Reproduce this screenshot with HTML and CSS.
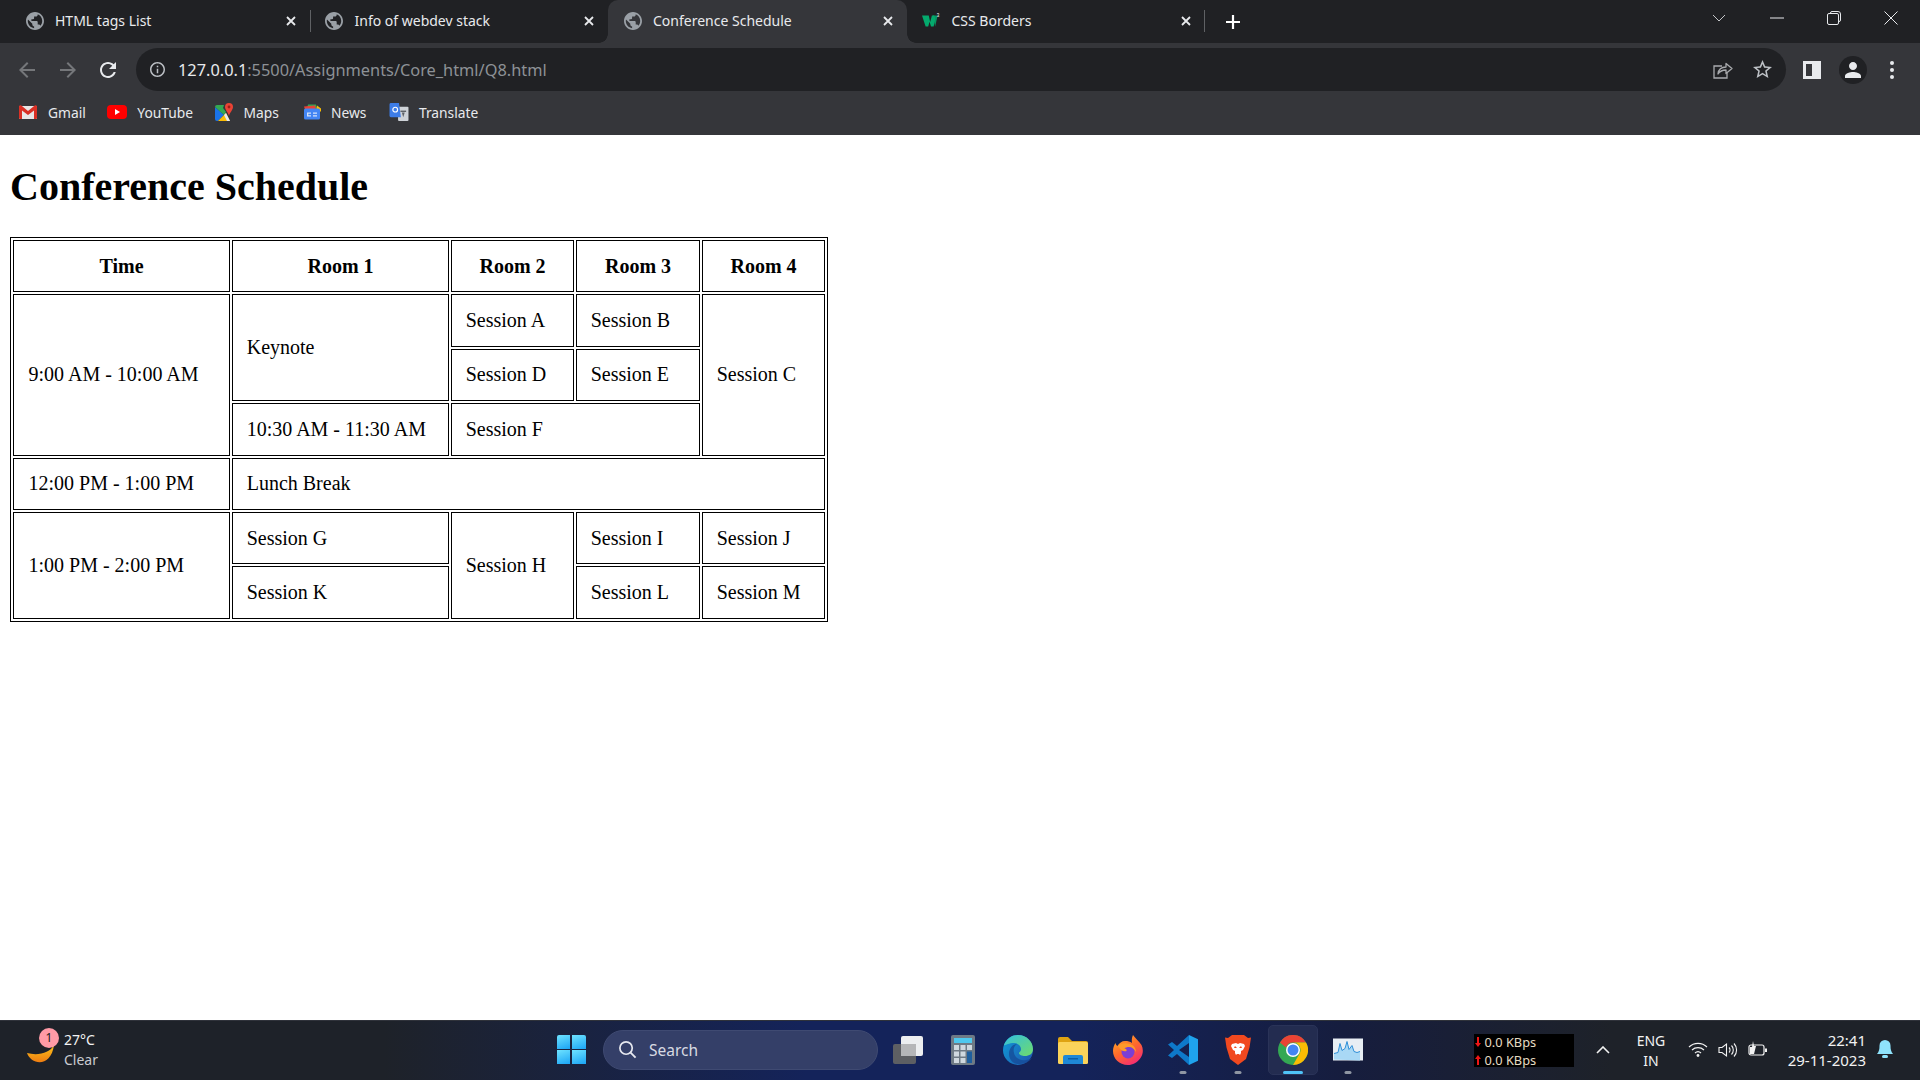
FILE: index.html
```html
<!DOCTYPE html>
<html lang="en">
<head>
<meta charset="utf-8">
<title>Conference Schedule</title>
<link rel="stylesheet" href="styles.css">
</head>
<body>
<svg class="defs" width="0" height="0" aria-hidden="true">
  <symbol id="globe" viewBox="2 2 20 20"><path fill="#9aa0a6" d="M12 2C6.48 2 2 6.48 2 12s4.48 10 10 10 10-4.48 10-10S17.52 2 12 2zm-1 17.93c-3.95-.49-7-3.85-7-7.93 0-.62.08-1.21.21-1.79L9 15v1c0 1.1.9 2 2 2v1.93zm6.9-2.54c-.26-.81-1-1.39-1.9-1.39h-1v-3c0-.55-.45-1-1-1H8v-2h2c.55 0 1-.45 1-1V7h2c1.1 0 2-.9 2-2v-.41c2.93 1.19 5 4.06 5 7.41 0 2.08-.8 3.97-2.1 5.39z"/></symbol>
  <symbol id="x" viewBox="0 0 12 12"><path d="M2 2l8 8M10 2l-8 8" stroke="#e8eaed" stroke-width="1.8" fill="none"/></symbol>
</svg>

<div class="chrome">
  <div class="tabstrip">
    <div class="tab first">
      <svg class="fav"><use href="#globe"/></svg><span class="tab-title">HTML tags List</span>
      <svg class="tab-x"><use href="#x"/></svg>
    </div>
    <div class="tab sep">
      <svg class="fav"><use href="#globe"/></svg><span class="tab-title">Info of webdev stack</span>
      <svg class="tab-x"><use href="#x"/></svg>
    </div>
    <div class="tab active">
      <svg class="fav"><use href="#globe"/></svg><span class="tab-title">Conference Schedule</span>
      <svg class="tab-x"><use href="#x"/></svg>
    </div>
    <div class="tab last">
      <svg class="fav" viewBox="0 0 20 18"><path fill="#04aa6d" d="M0 3h7.5l1.6 7 1.9-7h2.6l1 3.6L13 15h-3L8.4 9.7 6.9 15H4z"/><path fill="#04aa6d" d="M12 3h5.4L14.600 15z" opacity=".85"/><text x="16.500" y="5" class="w3-sup">3</text></svg>
      <span class="tab-title">CSS Borders</span>
      <svg class="tab-x"><use href="#x"/></svg>
    </div>
    <svg class="newtab" viewBox="0 0 16 16"><path d="M8 1v14M1 8h14" stroke="#fff" stroke-width="2.200"/></svg>
    <div class="winctl">
      <svg class="wc wc-chev" viewBox="0 0 14 8"><path d="M1 1l6 6 6-6" stroke="#c4c6c9" fill="none"/></svg>
      <svg class="wc wc-min" viewBox="0 0 14 14"><path d="M0 7h14" stroke="#e8eaed"/></svg>
      <svg class="wc wc-max" viewBox="0 0 14 14"><path d="M3.500 2.500V2a1.500 1.500 0 0 1 1.500-1.500h6A2.500 2.500 0 0 1 13.500 3v6a1.500 1.500 0 0 1-1.500 1.500" stroke="#e8eaed" fill="none"/><rect x=".5" y="2.500" width="11" height="11" rx="1.500" stroke="#e8eaed" fill="none"/></svg>
      <svg class="wc wc-close" viewBox="0 0 14 14"><path d="M.5.5l13 13M13.500.5l-13 13" stroke="#e8eaed" fill="none"/></svg>
    </div>
  </div>

  <div class="toolbar">
    <div class="navrow">
      <svg class="nav" viewBox="0 0 24 24"><path fill="#75777a" d="M20 11H7.830l5.590-5.590L12 4l-8 8 8 8 1.410-1.410L7.830 13H20v-2z"/></svg>
      <svg class="nav nav-fwd" viewBox="0 0 24 24"><path fill="#75777a" d="M12 4l-1.410 1.410L16.170 11H4v2h12.170l-5.580 5.590L12 20l8-8z"/></svg>
      <svg class="nav nav-reload" viewBox="0 0 24 24"><path fill="#e8eaed" d="M17.650 6.350C16.200 4.900 14.210 4 12 4c-4.420 0-7.990 3.580-7.990 8s3.570 8 7.990 8c3.730 0 6.840-2.550 7.730-6h-2.080c-.82 2.330-3.040 4-5.650 4-3.310 0-6-2.690-6-6s2.690-6 6-6c1.660 0 3.140.69 4.220 1.780L13 11h7V4l-2.350 2.350z"/></svg>
      <div class="omnibox">
        <svg class="omni-info" viewBox="2 2 20 20"><path fill="#bdc1c6" d="M11 7h2v2h-2zm0 4h2v6h-2zm1-9C6.480 2 2 6.480 2 12s4.480 10 10 10 10-4.480 10-10S17.520 2 12 2zm0 18c-4.410 0-8-3.590-8-8s3.590-8 8-8 8 3.590 8 8-3.590 8-8 8z"/></svg>
        <span class="url"><span class="url-host">127.0.0.1</span>:5500/Assignments/Core_html/Q8.html</span>
        <svg class="omni-share" viewBox="0 0 20 19"><path d="M9 6H1v12h13v-5" stroke="#a9abae" stroke-width="1.300" fill="none"/><path d="M5 14c.500-4.500 3.500-7 8-7V3.500l6 5-6 5V10c-3.500 0-6 1-8 4z" stroke="#a9abae" stroke-width="1.300" fill="#202124" stroke-linejoin="round"/></svg>
        <svg class="omni-star" viewBox="2 2 20 20"><path fill="#bdc1c6" d="M22 9.240l-7.190-.62L12 2 9.190 8.630 2 9.240l5.460 4.730L5.820 21 12 17.270 18.180 21l-1.630-7.030L22 9.240zM12 15.400l-3.760 2.270 1-4.280-3.320-2.880 4.380-.38L12 6.100l1.710 4.040 4.380.38-3.320 2.880 1 4.280L12 15.400z"/></svg>
      </div>
      <svg class="side" viewBox="0 0 18 18"><path fill="#e8eaed" fill-rule="evenodd" d="M0 0h18v18H0zM3 3v12h6V3z"/></svg>
      <div class="avatar"><svg viewBox="4 4 16 16"><path fill="#e8eaed" d="M12 12c2.210 0 4-1.790 4-4s-1.790-4-4-4-4 1.790-4 4 1.790 4 4 4zm0 2c-2.670 0-8 1.340-8 4v2h16v-2c0-2.660-5.330-4-8-4z"/></svg></div>
      <div class="kebab"><i></i><i></i><i></i></div>
    </div>
    <div class="bookmarks">
      <div class="bm"><svg class="bm-ic" viewBox="0 0 18 14"><path fill="#e8e6e6" d="M0 1h18v12a1 1 0 0 1-1 1H1a1 1 0 0 1-1-1z"/><path fill="#d93025" d="M0 1.500C0 .5 1.300-.3 2.300.5L9 6l6.700-5.500c1-.8 2.300 0 2.300 1V13a1 1 0 0 1-1 1h-2V5.500L9 10 3 5.500V14H1a1 1 0 0 1-1-1z"/></svg><span>Gmail</span></div>
      <div class="bm"><svg class="bm-ic bm-wide" viewBox="0 0 20 14"><rect width="20" height="14" rx="4" fill="#f00"/><path fill="#fff" d="M8 4l5 3-5 3z"/></svg><span>YouTube</span></div>
      <div class="bm bm-maps"><svg class="bm-ic" viewBox="0 0 18 18"><path fill="#1a73e8" d="M0 16V4l9 8-6 6H2a2 2 0 0 1-2-2z"/><path fill="#34a853" d="M0 4a2 2 0 0 1 2-2h7l-1 3 3 4-2 3z"/><path fill="#fbbc04" d="M3 18l8-8 4 8z"/><path fill="#e8eaed" d="M9 12l2-2 4 8h-3z"/><path fill="#ea4335" d="M14 0a4 4 0 0 1 4 4c0 3-3 5-4 9-1-4-4-6-4-9a4 4 0 0 1 4-4z"/><circle cx="14" cy="4" r="1.400" fill="#9c1f17"/></svg><span>Maps</span></div>
      <div class="bm bm-news"><svg class="bm-ic" viewBox="0 0 18 15"><path fill="#34a853" d="M5 0h8l1 4H4z"/><path fill="#ea4335" d="M1 2l11-1 1 4H2z"/><path fill="#fbbc04" d="M14 1l4 3v3h-5z"/><rect x="1" y="4" width="16" height="11" rx="1.500" fill="#4285f4"/><path fill="#d4e2fa" d="M4 8h4v1.300H5.300v1.400H8V12H4zM10 8h4v1.300h-4zM10 10.700h4V12h-4z"/></svg><span>News</span></div>
      <div class="bm"><svg class="bm-ic bm-wide" viewBox="0 0 20 19"><rect x="9" y="4" width="11" height="15" rx="1" fill="#cfd3d8"/><rect x="11.500" y="8" width="6" height="1.500" fill="#5f6368"/><path fill="#5f6368" d="M13 10h3l-1.500 5z"/><path fill="#3d7de8" d="M1.500 0H10l2 15H1.500A1.500 1.500 0 0 1 0 13.500v-12A1.500 1.500 0 0 1 1.500 0z"/><circle cx="6" cy="7" r="2.500" fill="none" stroke="#fff" stroke-width="1.200"/></svg><span>Translate</span></div>
    </div>
  </div>
</div>

<main class="page">
  <h1>Conference Schedule</h1>
  <table class="schedule">
    <colgroup>
      <col class="c-wide"><col class="c-wide"><col class="c-mid"><col class="c-midw"><col class="c-mid">
    </colgroup>
    <tr><th>Time</th><th>Room 1</th><th>Room 2</th><th>Room 3</th><th>Room 4</th></tr>
    <tr><td class="lead" rowspan="3">9:00 AM - 10:00 AM</td><td rowspan="2">Keynote</td><td>Session A</td><td>Session B</td><td rowspan="3">Session C</td></tr>
    <tr><td>Session D</td><td>Session E</td></tr>
    <tr><td>10:30 AM - 11:30 AM</td><td colspan="2">Session F</td></tr>
    <tr><td class="lead">12:00 PM - 1:00 PM</td><td colspan="4">Lunch Break</td></tr>
    <tr><td class="lead" rowspan="2">1:00 PM - 2:00 PM</td><td>Session G</td><td rowspan="2">Session H</td><td>Session I</td><td>Session J</td></tr>
    <tr><td>Session K</td><td>Session L</td><td>Session M</td></tr>
  </table>
</main>

<footer class="taskbar">
  <div class="weather">
    <div class="moon">
      <svg viewBox="0 0 28 30"><defs><linearGradient id="mg" x1="0" y1="0" x2="0" y2="1"><stop offset="0" stop-color="#fcc419"/><stop offset="1" stop-color="#ee7d12"/></linearGradient></defs><path fill="url(#mg)" d="M1 17C5 29 25 32 28 9 24 17 12 20 1 17z"/></svg>
      <span class="badge">1</span>
    </div>
    <div class="weather-text"><span class="temp">27°C</span><span class="cond">Clear</span></div>
  </div>
  <div class="start">
    <div class="winlogo"><i></i><i></i><i></i><i></i></div>
  </div>
  <div class="search">
    <svg viewBox="0 0 20 20"><circle cx="8.500" cy="8.500" r="6.500" fill="none" stroke="#e6e8ef" stroke-width="1.800"/><path d="M13 13l5.500 5.500" stroke="#e6e8ef" stroke-width="2"/></svg>
    <span>Search</span>
  </div>
  <div class="apps">
    <div class="app"><svg viewBox="0 0 30 30"><rect x="0" y="9" width="23" height="20" rx="2" fill="#5d5f63"/><rect x="8" y="1" width="22" height="20" rx="2" fill="#eceef0"/><rect x="8" y="9" width="15" height="12" fill="#b5b6b8"/></svg></div>
    <div class="app"><svg viewBox="0 0 24 30"><rect width="24" height="30" rx="2" fill="#6e7a85"/><rect x="3" y="3" width="18" height="5" fill="#4fc8ee"/><g fill="#cfd8df"><rect x="3" y="10" width="5" height="5"/><rect x="9.500" y="10" width="5" height="5"/><rect x="16" y="10" width="5" height="5"/><rect x="3" y="16.500" width="5" height="5"/><rect x="9.500" y="16.500" width="5" height="5"/><rect x="3" y="23" width="5" height="5"/><rect x="9.500" y="23" width="5" height="5"/></g><rect x="16" y="16.500" width="5" height="11.500" fill="#1f5f9e"/></svg></div>
    <div class="app"><svg viewBox="0 0 30 30"><defs><linearGradient id="e1" x1="0" y1="0" x2="1" y2=".6"><stop offset="0" stop-color="#0f9bd7"/><stop offset="1" stop-color="#1d5fb3"/></linearGradient><linearGradient id="e2" x1="0" y1="0" x2="1" y2="1"><stop offset="0" stop-color="#33bfe0"/><stop offset="1" stop-color="#6fdc6a"/></linearGradient></defs><circle cx="15" cy="15" r="15" fill="url(#e1)"/><path fill="url(#e2)" d="M1 10C4 3 9 0 15 0c9 0 15 7 15 14 0 5-4 7-8 7-3 0-6-1-6-3 0-1 2-1 2-4 0-3-3-6-7-6-6 0-9 3-10 2z"/><path fill="#164a95" d="M17 29c-6 1-11-4-11-10 0-6 4-10 8-10-3 2-4 5-3 9 1 5 6 8 12 7 2 0 4-1 6-2-2 3-7 6-12 6z" opacity=".75"/></svg></div>
    <div class="app"><svg viewBox="0 0 30 28"><path fill="#dfa312" d="M0 3a2 2 0 0 1 2-2h8l4 4h14a2 2 0 0 1 2 2v3H0z"/><rect y="6" width="30" height="22" rx="1.500" fill="#fbd35a"/><path fill="#1f88d6" d="M5 28v-7a2 2 0 0 1 2-2h16a2 2 0 0 1 2 2v7z"/><rect x="10" y="22" width="10" height="1.500" fill="#0b5fa8"/></svg></div>
    <div class="app"><svg viewBox="0 0 30 30"><defs><linearGradient id="ff" x1="0" y1="0" x2=".6" y2="1"><stop offset="0" stop-color="#ffb52a"/><stop offset=".55" stop-color="#ff6a2a"/><stop offset="1" stop-color="#f5306f"/></linearGradient></defs><path fill="url(#ff)" d="M20 0c2 3 6 6 8.500 10 2 4 1.800 9-1 13-3 4.500-8 7-12.500 7C6 30 0 23.500 0 16c0-3 1-6 2.500-8 .3 1.500 1 2.500 2 3C6 8 9 6 12 6c3 0 5 .5 7 2-.5-3 0-6 1-8z"/><circle cx="15" cy="17" r="6.500" fill="#7b3fd4"/><path fill="#ff9a2a" d="M5 11c3-3 10-4 15-.5 2 1.500 3 4 3 6.500-1.500-3-4-5-7-5-2 0-3.500.5-4.500 1.500 1.500.3 2.500 1 2 2.500-2 1-6 0-8.500-5z"/></svg></div>
    <div class="app has-dot"><svg viewBox="0 0 30 30"><path fill="#1fa3ec" d="M21 0l9 4.300v21.400L21 30z"/><path fill="#0e79c9" d="M21 0v8l-10 7 10 7v8L9 19l-5 4-4-2.500L6 15 0 9.500 4 7l5 4z"/></svg></div>
    <div class="app has-dot"><svg viewBox="0 0 26 30"><path fill="#f1491f" d="M3 3L7 0h12l4 3 3-.5-1.500 10L21 24l-8 6-8-6L1.500 12.500 0 2.500z"/><path fill="#fff" d="M7 9l4-1 2 1 2-1 4 1 1 2-2 4-2 1 0 2-1 2h-4l-1-2 0-2-2-1-2-4z"/><path fill="#f1491f" d="M10 11l2 2h-3zM16 11l-2 2h3zM11 19h4l-2 2z"/></svg></div>
    <div class="app current"><svg viewBox="0 0 30 30"><circle cx="15" cy="15" r="15" fill="#34a853"/><path fill="#ea4335" d="M2 7.500A15 15 0 0 1 28 7.500H15a7.500 7.500 0 0 0-7 5z"/><path fill="#fbbc04" d="M28 7.500A15 15 0 0 1 15 30l6.500-11.200a7.500 7.500 0 0 0 0-7.500A7.500 7.500 0 0 0 15 7.500z"/><circle cx="15" cy="15" r="7" fill="#fff"/><circle cx="15" cy="15" r="5.500" fill="#4285f4"/></svg></div>
    <div class="app has-dot"><svg viewBox="0 0 30 22"><rect width="30" height="22" fill="#e8eef4"/><path fill="#a9d8f5" d="M1 21V15l4-1 2-9 2 7 3-2 2-7 2 8 3-4 2 6 3 1 3-1v9z"/><path fill="none" stroke="#2f8fd8" stroke-width="1" d="M1 15l4-1 2-9 2 7 3-2 2-7 2 8 3-4 2 6 3 1 3-1"/></svg></div>
  </div>
  <div class="tray">
    <div class="netbox">
      <div class="netline"><svg viewBox="0 0 6 10"><path fill="#f01616" d="M2 0h2v6h2L3 10 0 6h2z"/></svg><span>0.0 KBps</span></div>
      <div class="netline"><svg viewBox="0 0 6 10"><path fill="#f01616" d="M2 10h2V4h2L3 0 0 4h2z"/></svg><span>0.0 KBps</span></div>
    </div>
    <svg class="tray-chev" viewBox="0 0 14 8"><path d="M1 7l6-6 6 6" stroke="#f2f2f2" stroke-width="1.600" fill="none"/></svg>
    <div class="lang"><span>ENG</span><span>IN</span></div>
    <svg class="tray-wifi" viewBox="0 0 20 15"><g fill="none" stroke="#f2f2f2" stroke-width="1.200"><path d="M1 5a13 13 0 0 1 18 0"/><path d="M4 8a9 9 0 0 1 12 0"/><path d="M7 11a4.500 4.500 0 0 1 6 0"/></g><circle cx="10" cy="13.500" r="1.400" fill="#f2f2f2"/></svg>
    <svg class="tray-vol" viewBox="0 0 20 16"><g fill="none" stroke="#f2f2f2" stroke-width="1.100"><path d="M1 5.500h3L8.500 2v12L4 10.500H1z"/><path d="M11 5.500a3.500 3.500 0 0 1 0 5"/><path d="M13.500 3.500a6.500 6.500 0 0 1 0 9"/><path d="M16 1.500a9.500 9.500 0 0 1 0 13"/></g></svg>
    <svg class="tray-bat" viewBox="0 0 20 17"><rect x="1" y="4" width="15" height="10" rx="2" fill="none" stroke="#f2f2f2" stroke-width="1.200"/><rect x="17" y="7.500" width="2" height="3.500" fill="#f2f2f2"/><path fill="#f2f2f2" d="M5 0l-1 6H2v7h4l2-8H6z"/></svg>
    <div class="clock"><span>22:41</span><span>29-11-2023</span></div>
    <svg class="tray-bell" viewBox="0 0 16 19"><path fill="#8fe3fb" d="M8 0a5.500 5.500 0 0 1 5.500 5.500c0 4 .5 6 2.500 8.500H0c2-2.500 2.500-4.500 2.500-8.500A5.500 5.500 0 0 1 8 0z"/><rect x="5" y="15" width="6" height="3" rx="1.500" fill="#8fe3fb"/></svg>
  </div>
</footer>
</body>
</html>
```

FILE: styles.css
```css
* { box-sizing: border-box; }
html, body { height: 100%; }
body {
  margin: 0;
  display: flex;
  flex-direction: column;
  height: 1080px;
  overflow: hidden;
  background: #fff;
  font-family: "Liberation Serif", serif;
}
svg { display: block; flex: none; }
.defs { position: absolute; }

/* browser chrome */
.chrome { flex: none; font-family: "Noto Sans", sans-serif; color: #e8eaed; }
.tabstrip {
  height: 43px;
  background: #202124;
  display: flex;
  align-items: flex-start;
  padding-left: 11px;
}
.tab {
  position: relative;
  width: 298.500px;
  height: 43px;
  display: flex;
  align-items: center;
  padding: 0 13px 1px 15px;
  flex: none;
}
.tab.first .tab-title { margin-left: 11px; }
.tab.sep::before, .tab.last::after {
  content: "";
  position: absolute;
  top: 10px;
  height: 22px;
  width: 1px;
  background: #5f6164;
}
.tab.sep::before { left: 0; }
.tab.last::after { right: 0; }
.tab.active {
  height: 48px;
  background: #35363a;
  border-radius: 10px 10px 0 0;
  padding-bottom: 6px;
  padding-left: 16px;
  z-index: 1;
}
.tab.active .tab-title { margin-left: 11px; }
.tab.active::before, .tab.active::after {
  content: "";
  position: absolute;
  bottom: 5px;
  width: 9px;
  height: 9px;
}
.tab.active::before { left: -9px; background: radial-gradient(circle at 0 0, transparent 8.500px, #35363a 9px); }
.tab.active::after { right: -9px; background: radial-gradient(circle at 100% 0, transparent 8.500px, #35363a 9px); }
.fav { width: 18px; height: 18px; }
.tab-title { margin: 0 0 2px 12px; font-size: 14px; white-space: nowrap; flex: 1; }
.tab-x { width: 12px; height: 12px; }
.w3-sup { font-size: 5px; fill: #fff; font-family: "Liberation Sans", sans-serif; }
.newtab { width: 16px; height: 16px; margin: 14px 0 0 20px; }
.winctl { margin-left: auto; display: flex; align-items: center; height: 36px; }
.wc { margin-right: 43px; }
.wc-chev { width: 14px; height: 8px; margin-right: 44px; }
.wc-min { width: 14px; height: 14px; }
.wc-max { width: 14px; height: 14px; }
.wc-close { width: 14px; height: 14px; margin-right: 22px; }

.toolbar { height: 92px; background: #35363a; padding-top: 5px; }
.navrow { height: 43px; display: flex; align-items: center; padding-left: 15px; }
.nav { width: 24px; height: 24px; margin-right: 17px; }
.nav-fwd { margin-right: 16px; }
.nav-reload { margin-right: 18px; }
.omnibox {
  width: 1650px;
  margin-left: -2px;
  height: 43px;
  border-radius: 22px;
  background: #202124;
  display: flex;
  align-items: center;
  padding: 0 14px;
}
.omni-info { width: 15px; height: 15px; }
.url { margin-left: 13px; font-size: 16.350px; color: #8d9196; flex: 1; white-space: nowrap; }
.url-host { color: #e8eaed; }
.omni-share { width: 20px; height: 19px; margin-right: 20px; }
.omni-star { width: 19px; height: 19px; }
.side { width: 18px; height: 18px; margin-left: 17px; }
.avatar {
  width: 28px;
  height: 28px;
  border-radius: 50%;
  background: #202124;
  margin-left: 18px;
  display: flex;
  align-items: center;
  justify-content: center;
}
.avatar svg { width: 16px; height: 16px; }
.kebab { margin-left: 23px; display: flex; flex-direction: column; gap: 3px; }
.kebab i { display: block; width: 4px; height: 4px; border-radius: 50%; background: #e8eaed; }

.bookmarks { height: 44px; display: flex; align-items: center; padding: 0 0 2px 19px; font-size: 13.800px; }
.bm { display: flex; align-items: center; margin-right: 21.500px; }
.bm-maps { margin-right: 24px; }
.bm-news { margin-right: 22.500px; }
.bm-ic { width: 18px; height: 18px; margin-right: 11px; }
.bm-wide { width: 20px; margin-right: 10px; }
.bm-news .bm-ic { margin-right: 10px; }
.bm span { white-space: nowrap; }

/* page */
.page { flex: 1; padding: 0 10px; min-height: 0; color: #000; }
h1 { font-size: 40px; font-weight: 700; margin: 28.500px 0 27.500px; line-height: 46px; }
.schedule {
  table-layout: fixed;
  width: 818px;
  border: 1px solid #000;
  border-spacing: 2px;
  border-collapse: separate;
  font-size: 20px;
}
.c-wide { width: 217px; }
.c-mid { width: 123px; }
.c-midw { width: 124px; }
.schedule th, .schedule td {
  border: 1px solid #000;
  height: 52.400px;
  padding: 0 13.700px;
}
.schedule td.lead { padding-left: 14.500px; }
.schedule th { font-weight: 700; text-align: center; }
.schedule td { text-align: left; }

/* taskbar */
.taskbar {
  flex: none;
  height: 60px;
  display: flex;
  align-items: center;
  padding-bottom: 2px;
  border-top: 1px solid #2f323a;
  background: linear-gradient(90deg, #1e2229 0, #1e2229 20%, #14235a 42%, #14235a 56%, #161d3e 70%, #1e2229 84%, #1e2229 100%);
  font-family: "Noto Sans", sans-serif;
  color: #f2f2f2;
}
.weather { width: 544px; display: flex; align-items: center; padding-left: 26px; }
.moon { position: relative; width: 28px; height: 30px; margin-top: 3px; }
.moon svg { width: 28px; height: 30px; }
.badge {
  position: absolute;
  left: 13px;
  top: -8px;
  width: 20px;
  height: 20px;
  border-radius: 50%;
  background: #ff9aa6;
  color: #1a1a1a;
  font-size: 12px;
  line-height: 20px;
  text-align: center;
}
.weather-text { margin-left: 10px; display: flex; flex-direction: column; font-size: 14px; line-height: 20px; }
.cond { color: #c9cbd0; }
.start { width: 54px; display: flex; justify-content: center; }
.winlogo { width: 29px; height: 29px; display: grid; grid-template: 1fr 1fr / 1fr 1fr; gap: 1.500px; }
.winlogo i { display: block; background: linear-gradient(160deg, #6fe3ff, #1aa4f5); }
.winlogo i:nth-child(1) { border-top-left-radius: 2px; }
.winlogo i:nth-child(2) { border-top-right-radius: 2px; }
.search {
  width: 275px;
  height: 40px;
  margin-left: 5px;
  border-radius: 20px;
  background: #343f68;
  border: 1px solid #3f4a72;
  display: flex;
  align-items: center;
  padding-left: 14px;
  font-size: 15.500px;
  color: #d8dae2;
}
.search svg { width: 19px; height: 19px; }
.search span { margin-left: 12px; }
.apps { margin-left: 2px; display: flex; }
.app {
  position: relative;
  width: 55px;
  height: 50px;
  display: flex;
  align-items: center;
  justify-content: center;
  border-radius: 5px;
  border: 1px solid transparent;
}
.app svg { width: 30px; height: 30px; }
.app:nth-child(2) svg { width: 24px; }
.app:nth-child(7) svg { width: 26px; }
.app:nth-child(9) svg { height: 23px; }
.app:nth-child(4) svg { height: 28px; }
.app.has-dot::after, .app.current::after {
  content: "";
  position: absolute;
  bottom: 0;
  left: 50%;
  transform: translateX(-50%);
  height: 3px;
  width: 7px;
  border-radius: 2px;
  background: #8f96a3;
}
.app.current { background: #232c50; border-color: #2a3358; width: 50px; margin: 0 2.500px; }
.app.current::after { width: 20px; background: #4fc3f7; }
.tray { margin-left: auto; display: flex; align-items: center; }
.netbox {
  width: 100px;
  height: 33px;
  margin-top: 2px;
  background: #000;
  padding-left: 1px;
  display: flex;
  flex-direction: column;
  justify-content: center;
  gap: 2px;
  font-size: 12.800px;
  line-height: 16px;
  color: #e6dcc4;
}
.netline { display: flex; align-items: center; gap: 4px; }
.netline svg { width: 6px; height: 10px; }
.tray-chev { width: 14px; height: 8px; margin-left: 22px; }
.lang { width: 50px; margin: 2px 0 0 16.500px; display: flex; flex-direction: column; align-items: center; font-size: 14px; line-height: 20px; }
.tray-wifi { width: 20px; height: 15px; margin-left: 12px; }
.tray-vol { width: 20px; height: 16px; margin-left: 10px; }
.tray-bat { width: 20px; height: 17px; margin-left: 10px; }
.clock { width: 98px; display: flex; flex-direction: column; align-items: flex-end; font-size: 15px; line-height: 20px; }
.tray-bell { width: 16px; height: 19px; margin: 0 27px 0 11px; }
```
